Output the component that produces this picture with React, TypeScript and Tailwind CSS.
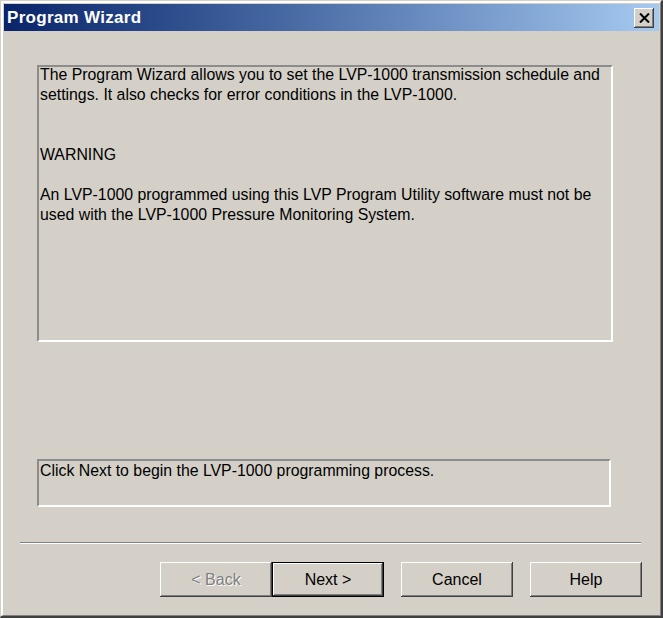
import React from "react";

const raised =
  "bg-[#d4d0c8] shadow-[inset_-1px_-1px_#404040,inset_1px_1px_#ffffff,inset_-2px_-2px_#808080,inset_2px_2px_#d4d0c8]";

function WinButton({
  label,
  disabled,
  isDefault,
}: {
  label: string;
  disabled?: boolean;
  isDefault?: boolean;
}) {
  return (
    <div
      className={`w-[112px] h-[35px] ${isDefault ? "border border-black" : ""} flex`}
    >
      <div
        className={`flex-1 flex items-center justify-center text-[16px] ${raised} ${
          disabled ? "text-[#808080] [text-shadow:1px_1px_#ffffff]" : "text-black"
        }`}
      >
        {label}
      </div>
    </div>
  );
}

export default function App() {
  return (
    <div className="w-[663px] h-[618px] font-['Liberation_Sans',Arial,sans-serif] bg-[#d4d0c8]">
      {/* window frame */}
      <div className="w-full h-full border-t border-l border-r-2 border-b-2 border-t-[#d4d0c8] border-l-[#d4d0c8] border-r-[#404040] border-b-[#404040]">
        <div className="w-full h-full border-t-2 border-l-2 border-r border-b border-t-white border-l-white border-r-[#808080] border-b-[#808080] p-[1px] flex flex-col">
          {/* title bar */}
          <div className="h-[27px] bg-gradient-to-r from-[#0a246a] to-[#a6caf0] flex items-center justify-between pl-[3px] pr-[5px]">
            <span className="text-white font-bold text-[17px] tracking-[0.3px]">
              Program Wizard
            </span>
            <div className={`w-[20px] h-[20px] flex items-center justify-center ${raised}`}>
              <svg width="11" height="10" viewBox="0 0 11 10">
                <path
                  d="M1 0.5 L10 9.5 M10 0.5 L1 9.5"
                  stroke="#000"
                  strokeWidth="2"
                  fill="none"
                />
              </svg>
            </div>
          </div>

          {/* body */}
          <div className="flex-1 flex flex-col pl-[33px] pr-[46px] pt-[34px]">
            <div className="h-[277px] border-2 border-t-[#8c8c8c] border-l-[#8c8c8c] border-r-white border-b-white px-[1px] text-[15.85px] leading-[20px] text-black">
              <p className="-mt-[2px]">
                The Program Wizard allows you to set the LVP-1000 transmission schedule and
                settings. It also checks for error conditions in the LVP-1000.
              </p>
              <p className="mt-[40px]">WARNING</p>
              <p className="mt-[20px]">
                An LVP-1000 programmed using this LVP Program Utility software must not be
                used with the LVP-1000 Pressure Monitoring System.
              </p>
            </div>

            <div className="mt-[117px] mr-[2px] h-[48px] border-2 border-t-[#8c8c8c] border-l-[#8c8c8c] border-r-white border-b-white px-[1px] text-[15.85px] leading-[20px] text-black">
              Click Next to begin the LVP-1000 programming process.
            </div>
          </div>

          {/* separator */}
          <div className="ml-[16px] mr-[18px] border-t border-t-[#808080] border-b border-b-white" />

          {/* buttons */}
          <div className="flex items-start pl-[156px] pt-[18px] pb-[17px]">
            <WinButton label="< Back" disabled />
            <WinButton label="Next >" isDefault />
            <div className="w-[17px]" />
            <WinButton label="Cancel" />
            <div className="w-[17px]" />
            <WinButton label="Help" />
          </div>
        </div>
      </div>
    </div>
  );
}
